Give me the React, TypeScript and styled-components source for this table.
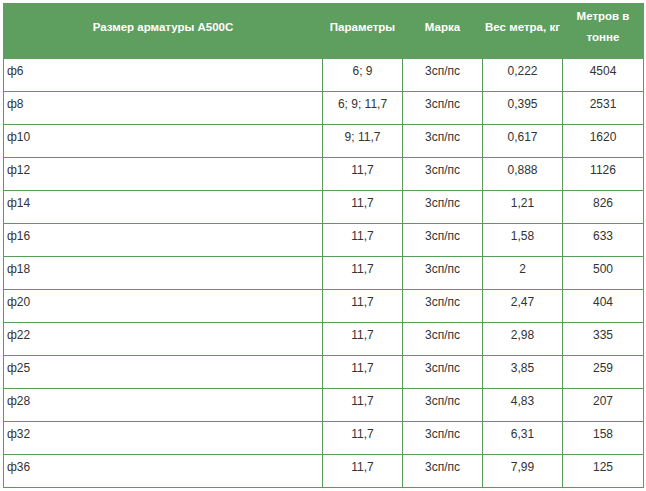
import React from "react";
import styled, { createGlobalStyle } from "styled-components";

const Global = createGlobalStyle`
  html, body { margin: 0; padding: 0; background: #fff; }
  body { font-family: "Liberation Sans", Arial, Helvetica, sans-serif; }
`;

const Page = styled.div`
  padding: 3px 3px 0 3px;
`;

const Table = styled.table`
  border-collapse: collapse;
  table-layout: fixed;
  width: 640px;
  font-family: "Liberation Sans", Arial, Helvetica, sans-serif;
  font-size: 12px;
  color: #333;
`;

const GREEN = "#5e9e5e";

const Th = styled.th`
  background: ${GREEN};
  color: #fff;
  font-weight: bold;
  font-size: 11.5px;
  line-height: 21px;
  text-align: center;
  vertical-align: middle;
  padding: 2px 2px 10px;
  border: 1px solid ${GREEN};
`;

const Td = styled.td<{ $left?: boolean }>`
  border: 1px solid #5c9c5a;
  line-height: 21px;
  padding: 2px 3px 9px;
  vertical-align: top;
  text-align: ${(p) => (p.$left ? "left" : "center")};
`;

const rows: [string, string, string, string, string][] = [
  ["ф6", "6; 9", "3сп/пс", "0,222", "4504"],
  ["ф8", "6; 9; 11,7", "3сп/пс", "0,395", "2531"],
  ["ф10", "9; 11,7", "3сп/пс", "0,617", "1620"],
  ["ф12", "11,7", "3сп/пс", "0,888", "1126"],
  ["ф14", "11,7", "3сп/пс", "1,21", "826"],
  ["ф16", "11,7", "3сп/пс", "1,58", "633"],
  ["ф18", "11,7", "3сп/пс", "2", "500"],
  ["ф20", "11,7", "3сп/пс", "2,47", "404"],
  ["ф22", "11,7", "3сп/пс", "2,98", "335"],
  ["ф25", "11,7", "3сп/пс", "3,85", "259"],
  ["ф28", "11,7", "3сп/пс", "4,83", "207"],
  ["ф32", "11,7", "3сп/пс", "6,31", "158"],
  ["ф36", "11,7", "3сп/пс", "7,99", "125"],
];

export default function App() {
  return (
    <Page>
      <Global />
      <Table>
        <colgroup>
          <col style={{ width: 319 }} />
          <col style={{ width: 80 }} />
          <col style={{ width: 80 }} />
          <col style={{ width: 80 }} />
          <col style={{ width: 81 }} />
        </colgroup>
        <thead>
          <tr>
            <Th>Размер арматуры A500C</Th>
            <Th>Параметры</Th>
            <Th>Марка</Th>
            <Th>Вес метра, кг</Th>
            <Th>Метров в тонне</Th>
          </tr>
        </thead>
        <tbody>
          {rows.map((r) => (
            <tr key={r[0]}>
              <Td $left>{r[0]}</Td>
              <Td>{r[1]}</Td>
              <Td>{r[2]}</Td>
              <Td>{r[3]}</Td>
              <Td>{r[4]}</Td>
            </tr>
          ))}
        </tbody>
      </Table>
    </Page>
  );
}
